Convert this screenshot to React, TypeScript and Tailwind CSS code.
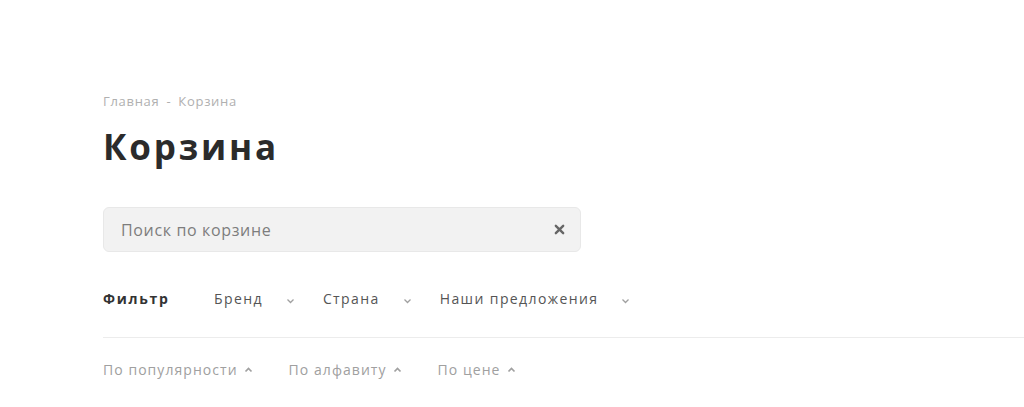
import { useState } from 'react';

const filters = ['Бренд', 'Страна', 'Наши предложения'];
const sorts = ['По популярности', 'По алфавиту', 'По цене'];

function ChevronDown() {
    return (
        <svg width="9" height="6" viewBox="0 0 9 6" className="text-[#a0a0a0]">
            <path d="M1.5 1.5 L4.5 4.5 L7.5 1.5" fill="none" stroke="currentColor" strokeWidth="1.3" />
        </svg>
    );
}

function ChevronUp() {
    return (
        <svg width="9" height="6" viewBox="0 0 9 6" className="text-[#a0a0a0]">
            <path d="M1.5 4.5 L4.5 1.5 L7.5 4.5" fill="none" stroke="currentColor" strokeWidth="1.7" />
        </svg>
    );
}

export default function App() {
    const [query, setQuery] = useState('');

    return (
        <div className="bg-white min-h-[407px] pt-[92px] pl-[103px] font-['Open_Sans',sans-serif] overflow-hidden">
            <div className="flex items-center gap-[7px] text-[13px] leading-[18px] tracking-[0.7px] text-[#b0b0b0]">
                <span>Главная</span>
                <span>-</span>
                <span>Корзина</span>
            </div>

            <h1 className="mt-[17px] text-[35px] leading-[40px] font-bold tracking-[2.8px] text-[#2b2b2b]">Корзина</h1>

            <div className="mt-[40px] w-[478px] h-[45px] rounded-[6px] bg-[#f2f2f2] border border-[#e8e8e8] flex items-center pl-[17px] pr-[15px]">
                <input
                    value={query}
                    onChange={(e) => setQuery(e.target.value)}
                    placeholder="Поиск по корзине"
                    className="flex-1 bg-transparent outline-none text-[16px] tracking-[0.65px] text-[#333] placeholder:text-[#7d7d7d]"
                />
                <svg width="11" height="11" viewBox="0 0 12 12" className="text-[#666]">
                    <path d="M2 2 L10 10 M10 2 L2 10" stroke="currentColor" strokeWidth="2.6" strokeLinecap="round" />
                </svg>
            </div>

            <div className="mt-[37px] flex items-center h-[20px] text-[14px] leading-[20px] tracking-[1.4px]">
                <span className="font-bold text-[#333] tracking-[1.7px] w-[111px]">Фильтр</span>
                {filters.map((f) => (
                    <div key={f} className="flex items-center gap-[23px] mr-[28px]">
                        <span className="text-[#555]">{f}</span>
                        <span className="mt-[4px]"><ChevronDown /></span>
                    </div>
                ))}
            </div>

            <div className="mt-[28px] border-t border-[#ececec]" />

            <div className="mt-[22px] flex items-center h-[20px] text-[14px] leading-[20px] tracking-[1.05px] text-[#a0a0a0]">
                {sorts.map((s) => (
                    <div key={s} className="flex items-center gap-[6px] mr-[36px]">
                        <span>{s}</span>
                        <ChevronUp />
                    </div>
                ))}
            </div>
        </div>
    );
}
